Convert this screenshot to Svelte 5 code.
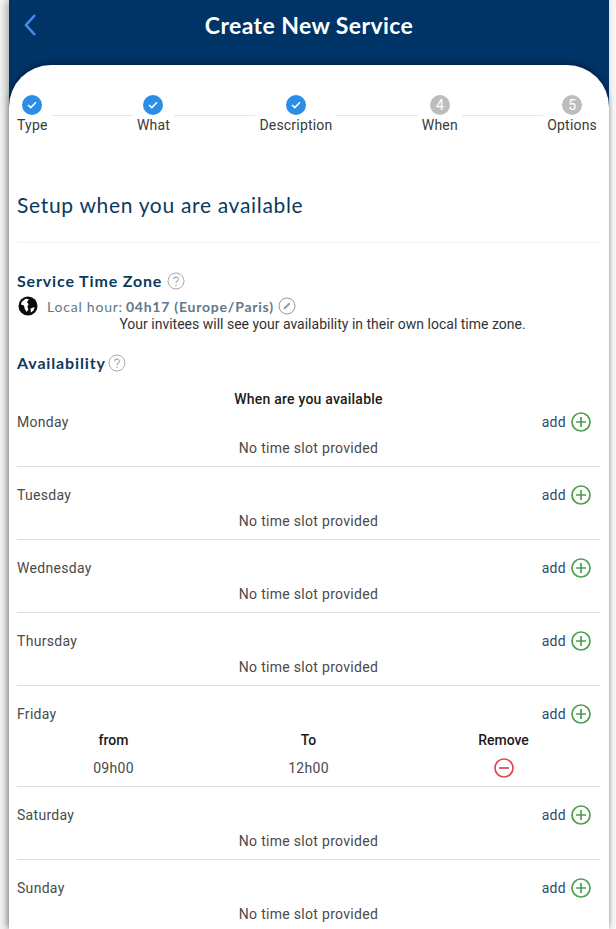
<script>
  const steps = [
    { label: 'Type', done: true },
    { label: 'What', done: true },
    { label: 'Description', done: true },
    { label: 'When', num: 4 },
    { label: 'Options', num: 5 }
  ];

  const days = [
    { name: 'Monday' },
    { name: 'Tuesday' },
    { name: 'Wednesday' },
    { name: 'Thursday' },
    { name: 'Friday', slot: { from: '09h00', to: '12h00' } },
    { name: 'Saturday' },
    { name: 'Sunday' }
  ];
</script>

<div class="page">
  <div class="shell">
    <header class="topbar">
      <button class="back" aria-label="Back">
        <svg width="14" height="24" viewBox="0 0 14 24" fill="none">
          <path d="M12 2 L3 12 L12 22" stroke="#3f8fe8" stroke-width="2.6" />
        </svg>
      </button>
      <h1>Create New Service</h1>
    </header>

    <main class="card">
      <div class="stepper">
        {#each steps as step, i}
          {#if i > 0}
            <div class="connector"></div>
          {/if}
          <div class="step">
            {#if step.done}
              <span class="dot done">
                <svg width="10" height="8" viewBox="0 0 10 8" fill="none">
                  <path d="M1 4 L3.8 6.6 L9 1.2" stroke="#fff" stroke-width="1.5" />
                </svg>
              </span>
            {:else}
              <span class="dot">{step.num}</span>
            {/if}
            <span class="step-label">{step.label}</span>
          </div>
        {/each}
      </div>

      <h2 class="title">Setup when you are available</h2>

      <div class="section-head zone-head">
        <h3>Service Time Zone</h3>
        <svg class="help" width="18" height="18" viewBox="0 0 18 18" fill="none">
          <circle cx="9" cy="9" r="8" stroke="#aaa" stroke-width="1" />
          <path d="M6.6 7.2 C6.6 4.4 11.4 4.4 11.4 7.2 C11.4 9 9 9 9 11" stroke="#aaa" stroke-width="1.1" />
          <circle cx="9" cy="13.2" r="0.8" fill="#aaa" />
        </svg>
      </div>

      <div class="local">
        <svg width="20" height="20" viewBox="0 0 20 20">
          <circle cx="10" cy="10" r="9.5" fill="#0b0b0b" />
          <path d="M3.6 6 L7.6 2.8 L11 3.2 L9 6 L10.6 8.4 L9.4 10.4 L10.4 13.4 L8.6 16 L6.6 12.6 L6 9.6 L3 8.4 Z" fill="#fff" />
          <path d="M12.6 12.4 L16.6 11 L15.6 14.4 L12.8 16.6 Z" fill="#fff" />
        </svg>
        <span class="local-label">Local hour:</span>
        <span class="local-value">04h17 (Europe/Paris)</span>
        <svg class="edit" width="18" height="18" viewBox="0 0 18 18" fill="none">
          <circle cx="9" cy="9" r="8" stroke="#999" stroke-width="1" />
          <path d="M5.5 12.5 L6 10.6 L11 5.6 L12.4 7 L7.4 12 Z" fill="#999" />
        </svg>
      </div>
      <p class="note">Your invitees will see your availability in their own local time zone.</p>

      <div class="section-head avail-head">
        <h3>Availability</h3>
        <svg class="help" width="18" height="18" viewBox="0 0 18 18" fill="none">
          <circle cx="9" cy="9" r="8" stroke="#aaa" stroke-width="1" />
          <path d="M6.6 7.2 C6.6 4.4 11.4 4.4 11.4 7.2 C11.4 9 9 9 9 11" stroke="#aaa" stroke-width="1.1" />
          <circle cx="9" cy="13.2" r="0.8" fill="#aaa" />
        </svg>
      </div>

      <div class="when">When are you available</div>

      {#each days as day}
        <section class="day" class:has-slot={day.slot}>
          <div class="day-head">
            <span class="day-name">{day.name}</span>
            <span class="add">
              add
              <svg width="20" height="20" viewBox="0 0 20 20" fill="none">
                <circle cx="10" cy="10" r="9" stroke="#4c9f50" stroke-width="1.7" />
                <path d="M10 5 V15 M5 10 H15" stroke="#4c9f50" stroke-width="1.7" />
              </svg>
            </span>
          </div>
          {#if day.slot}
            <div class="slot-grid">
              <strong>from</strong>
              <strong>To</strong>
              <strong>Remove</strong>
              <span>{day.slot.from}</span>
              <span>{day.slot.to}</span>
              <svg class="remove" width="20" height="20" viewBox="0 0 20 20" fill="none">
                <circle cx="10" cy="10" r="9" stroke="#d9484a" stroke-width="1.7" />
                <path d="M5 10 H15" stroke="#d9484a" stroke-width="1.7" />
              </svg>
            </div>
          {:else}
            <div class="empty">No time slot provided</div>
          {/if}
        </section>
      {/each}
    </main>
  </div>
</div>

<style>
  :global(body) {
    margin: 0;
    background: #fff;
  }

  .page {
    width: 616px;
    height: 929px;
    overflow: hidden;
    background: #f6f6f6;
    font-family: Roboto, sans-serif;
  }

  .shell {
    width: 600px;
    height: 929px;
    margin-left: 9px;
    background: #003366;
    box-shadow: -3px 0 8px rgba(0, 0, 0, 0.3);
  }

  .topbar {
    height: 65px;
    position: relative;
    display: flex;
    align-items: flex-start;
    justify-content: center;
  }

  .topbar h1 {
    margin: 11px 0 0;
    font-family: Lato, sans-serif;
    font-size: 23px;
    line-height: 28px;
    font-weight: 700;
    letter-spacing: 0.4px;
    color: #fff;
  }

  .back {
    position: absolute;
    left: 14px;
    top: 13px;
    padding: 0;
    border: 0;
    background: none;
    display: flex;
  }

  .card {
    height: 864px;
    box-sizing: border-box;
    padding: 29px 9px 0 8px;
    background: #fff;
    border-radius: 42px 42px 0 0;
    box-shadow: 0 -2px 5px rgba(0, 0, 0, 0.35);
    color: #003057;
  }

  .stepper {
    display: flex;
    align-items: flex-start;
    height: 52px;
    padding-right: 3px;
  }

  .step {
    display: flex;
    flex-direction: column;
    align-items: center;
    flex: none;
  }

  .dot {
    width: 20px;
    height: 20px;
    border-radius: 50%;
    background: #bdbdbd;
    color: #fff;
    font-size: 14px;
    display: flex;
    align-items: center;
    justify-content: center;
    margin-top: 1px;
  }

  .dot.done {
    background: #2b8ee6;
  }

  .step-label {
    font-size: 14px;
    line-height: 20px;
    letter-spacing: 0.2px;
    color: #3a3a3a;
  }

  .connector {
    flex: 1;
    height: 1px;
    margin: 21px 4px 0;
    background: #e6e6e6;
  }

  .title {
    margin: 45px 0 0;
    height: 51px;
    font-family: Lato, sans-serif;
    font-size: 21px;
    line-height: 28px;
    font-weight: 400;
    letter-spacing: 0.68px;
    color: #0d3a5e;
    border-bottom: 1px solid #f2f2f2;
  }

  .section-head {
    display: flex;
    align-items: center;
  }

  .section-head h3 {
    margin: 0;
    font-family: Lato, sans-serif;
    font-size: 16px;
    line-height: 22px;
    font-weight: 700;
    letter-spacing: 0.85px;
    color: #0d3a5e;
  }

  .zone-head {
    margin-top: 27px;
    gap: 5px;
  }

  .avail-head {
    margin-top: 19px;
    gap: 2px;
  }

  .local {
    display: flex;
    align-items: center;
    height: 22px;
    margin-top: 3px;
    margin-left: 1px;
    font-family: Lato, sans-serif;
    font-size: 14px;
    font-weight: 700;
    letter-spacing: 0.78px;
    color: #60788c;
  }

  .local-label {
    margin-left: 9px;
    font-weight: 400;
    margin-right: 3px;
  }

  .edit {
    margin-left: 4px;
  }

  .note {
    margin: -2px 0 0 28px;
    font-size: 14px;
    line-height: 18px;
    text-align: center;
    color: #333;
  }

  .when {
    margin-top: 15px;
    height: 20px;
    font-size: 14px;
    line-height: 20px;
    font-weight: 500;
    letter-spacing: 0.22px;
    text-align: center;
    color: #1b1b1b;
  }

  .day {
    height: 73px;
    box-sizing: border-box;
    padding-top: 15px;
    border-bottom: 1px solid #dedede;
  }

  .day.has-slot {
    height: 101px;
  }

  .day:first-of-type {
    height: 58px;
    padding-top: 0;
  }

  .day-head {
    display: flex;
    justify-content: space-between;
    align-items: center;
    height: 26px;
    padding-right: 9px;
  }

  .day-name {
    font-size: 14px;
    letter-spacing: 0.3px;
    color: #4a4a4a;
  }

  .add {
    display: flex;
    align-items: center;
    gap: 5px;
    font-size: 14px;
    letter-spacing: 0.3px;
    color: #2f4a6b;
  }

  .empty {
    text-align: center;
    font-size: 14px;
    line-height: 26px;
    letter-spacing: 0.3px;
    color: #4a4a4a;
  }

  .slot-grid {
    display: grid;
    grid-template-columns: repeat(3, 195px);
    justify-items: center;
    align-items: center;
    grid-template-rows: 28px 28px;
    margin: -1px 0 0 -1px;
    font-size: 14px;
    color: #4a4a4a;
    letter-spacing: 0.3px;
  }

  .slot-grid strong {
    font-weight: 500;
    color: #1b1b1b;
    letter-spacing: 0;
  }
</style>
